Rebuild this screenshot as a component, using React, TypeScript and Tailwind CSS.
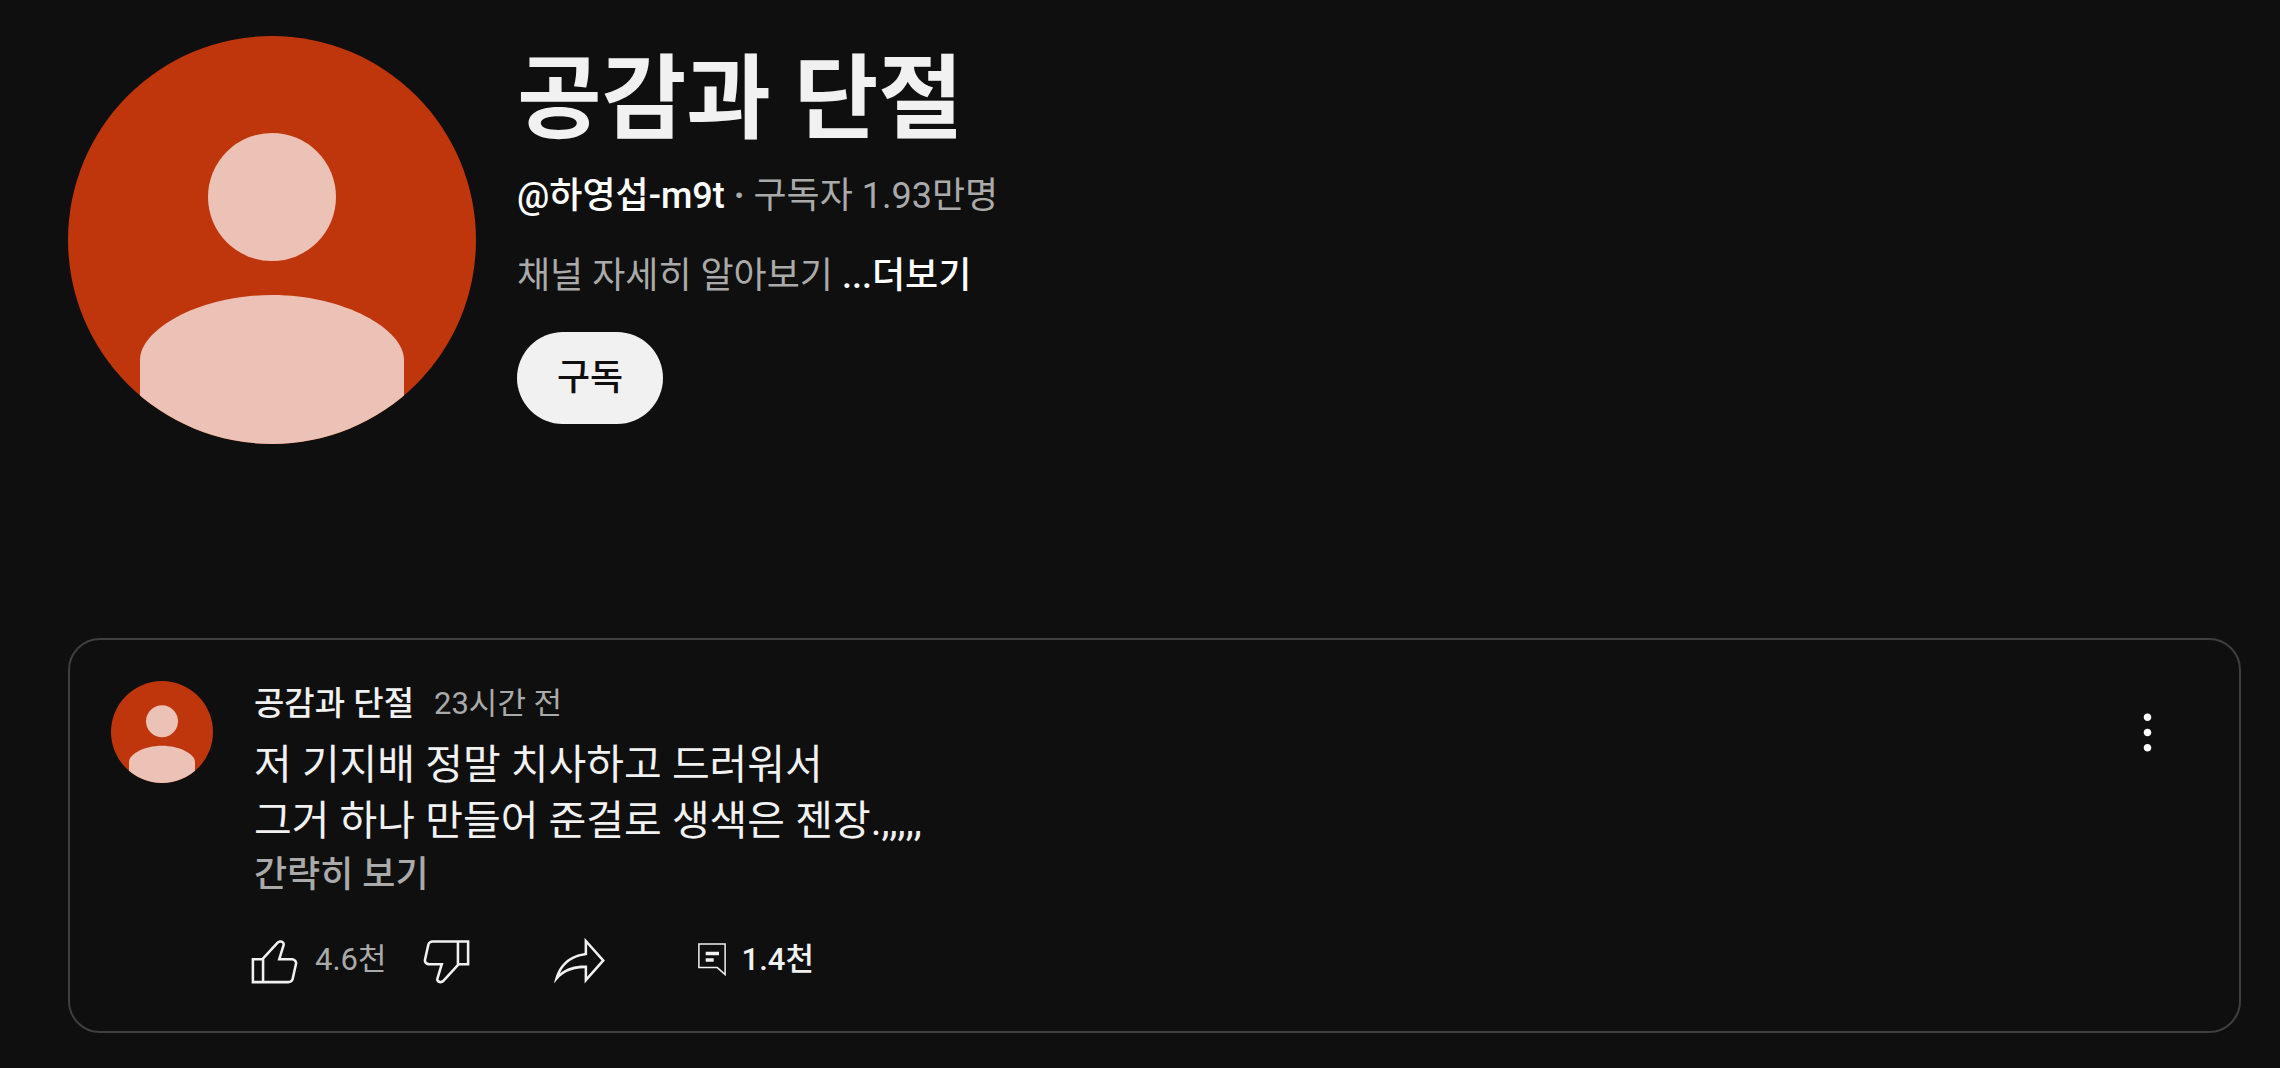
import React from "react";

function Avatar({ className }: { className: string }) {
  return (
    <div className={className} role="img" aria-label="공감과 단절">
      <svg viewBox="0 0 408 408" className="size-full" aria-hidden="true">
        <rect width="408" height="408" fill="#bf360c" />
        <circle cx="204" cy="161" r="64" fill="#ecc2b6" />
        <path d="M72 408V324C72 293 132 259 204 259S336 293 336 324V408Z" fill="#ecc2b6" />
      </svg>
    </div>
  );
}

function Icon({ d }: { d: string }) {
  return (
    <svg viewBox="0 0 24 24" className="size-[61px] shrink-0" fill="currentColor" aria-hidden="true">
      <path d={d} />
    </svg>
  );
}

const LIKE =
  "M18.77,11h-4.23l1.52-4.94C16.38,5.03,15.54,4,14.38,4c-0.58,0-1.14,0.24-1.52,0.65L7,11H3v10h4h1h9.43c1.06,0,1.98-0.67,2.19-1.61l1.34-6C21.23,12.15,20.18,11,18.77,11z M7,20H4v-8h3V20z M19.98,13.17l-1.34,6C18.54,19.65,18.03,20,17.43,20H8v-8.61l5.6-6.06C13.79,5.12,14.08,5,14.38,5c0.26,0,0.5,0.11,0.63,0.3c0.07,0.1,0.15,0.26,0.09,0.47l-1.52,4.94L13.18,12h1.35h4.23c0.41,0,0.8,0.17,1.03,0.46C19.92,12.61,20.05,12.86,19.98,13.17z";
const DISLIKE =
  "M17,4h-1H6.57C5.5,4,4.59,4.67,4.38,5.61l-1.34,6C2.77,12.85,3.82,14,5.23,14h4.23l-1.52,4.94C7.62,19.97,8.46,21,9.62,21c0.58,0,1.14-0.24,1.52-0.65L17,14h4V4H17z M10.4,19.67C10.21,19.88,9.92,20,9.62,20c-0.26,0-0.5-0.11-0.63-0.3c-0.07-0.1-0.15-0.26-0.09-0.47l1.52-4.94l0.4-1.29H9.46H5.23c-0.41,0-0.8-0.17-1.03-0.46c-0.12-0.15-0.25-0.4-0.18-0.72l1.34-6C5.46,5.35,5.97,5,6.57,5H16v8.61L10.4,19.67z M20,13h-3V5h3V13z";
const SHARE =
  "M15,5.63L20.66,12L15,18.37V15v-1h-1c-3.96,0-7.14,1-9.75,3.09c1.84-4.07,5.11-6.4,9.89-7.1L15,9.86V9V5.63 M14,3v6C6.22,10.13,3.11,15.33,2,21c2.78-3.97,6.44-6,12-6v6l8-9L14,3L14,3z";
const MORE =
  "M12,16.5c0.83,0,1.5,0.67,1.5,1.5s-0.67,1.5-1.5,1.5s-1.5-0.67-1.5-1.5S11.17,16.5,12,16.5z M10.5,12c0,0.83,0.67,1.5,1.5,1.5s1.5-0.67,1.5-1.5s-0.67-1.5-1.5-1.5S10.5,11.17,10.5,12z M10.5,6c0,0.83,0.67,1.5,1.5,1.5s1.5-0.67,1.5-1.5S12.83,4.5,12,4.5S10.5,5.17,10.5,6z";

function CommentIcon() {
  return (
    <svg viewBox="0 0 28 34" className="h-[34px] w-[28px] shrink-0" aria-hidden="true">
      <path d="M0.9 0.9H27.1V31.6L19.3 24.6H0.9Z" fill="none" stroke="currentColor" strokeWidth="1.5" />
      <path d="M7.7 8.8H21V12.2H7.7ZM7.7 15.2H15.7V18.8H7.7Z" fill="currentColor" />
    </svg>
  );
}

function ChannelHeader() {
  return (
    <header className="flex gap-[41px]">
      <Avatar className="size-[408px] shrink-0 overflow-hidden rounded-full" />
      <div className="flex min-w-0 flex-col items-start">
        <h1 className="text-[92px] leading-[128px] font-bold">공감과 단절</h1>
        <p className="mt-1.5 text-[36px] leading-[52px] text-[#aaaaaa]">
          <span className="font-medium text-white">@하영섭-m9t</span> <span className="font-bold">·</span> 구독자 1.93만명
        </p>
        <p className="mt-7 text-[36px] leading-[52px] text-[#aaaaaa]">
          채널 자세히 알아보기{" "}
          <button type="button" className="font-medium text-white">
            ...더보기
          </button>
        </p>
        <button
          type="button"
          className="mt-7.5 h-[92px] rounded-full bg-[#f1f1f1] px-10 text-[36px] leading-[52px] font-medium text-[#0f0f0f]"
        >
          구독
        </button>
      </div>
    </header>
  );
}

function Post() {
  return (
    <article className="mt-[194px] flex rounded-[32px] border-2 border-[#3f3f3f] px-[41px] pt-[41px] pb-[20px]">
      <Avatar className="size-[102px] shrink-0 overflow-hidden rounded-full" />
      <div className="ml-[41px] min-w-0 flex-1">
        <div className="flex items-center gap-5 leading-[46px]">
          <h2 className="text-[33px] font-medium">공감과 단절</h2>
          <span className="text-[31px] text-[#aaaaaa]">23시간 전</span>
        </div>
        <p className="mt-2.5 text-[41px] leading-[56px]">
          저 기지배 정말 치사하고 드러워서
          <br />
          그거 하나 만들어 준걸로 생색은 젠장.,,,,,
        </p>
        <button type="button" className="block text-[36px] leading-[52px] font-medium text-[#aaaaaa]">
          간략히 보기
        </button>
        <div className="mt-2 -ml-[10px] flex h-[102px] items-center text-[31px] leading-[46px]">
          <button type="button" aria-label="좋아요" className="flex">
            <Icon d={LIKE} />
          </button>
          <span className="ml-2.5 text-[#aaaaaa]">4.6천</span>
          <button type="button" aria-label="싫어요" className="ml-[29px] flex">
            <Icon d={DISLIKE} />
          </button>
          <button type="button" aria-label="공유" className="ml-[72px] flex">
            <Icon d={SHARE} />
          </button>
          <button type="button" aria-label="댓글 1.4천개" className="ml-[88px] flex items-center gap-4 font-medium">
            <CommentIcon />
            1.4천
          </button>
        </div>
      </div>
      <button type="button" aria-label="작업 메뉴" className="flex size-[102px] shrink-0 items-center justify-center text-white">
        <Icon d={MORE} />
      </button>
    </article>
  );
}

export default function App() {
  return (
    <main
      lang="ko"
      className="min-h-screen bg-[#0f0f0f] pt-9 pr-[39px] pb-[34px] pl-[68px] font-[Roboto,'Noto_Sans_CJK_KR',sans-serif] text-[#f1f1f1]"
    >
      <ChannelHeader />
      <Post />
    </main>
  );
}
